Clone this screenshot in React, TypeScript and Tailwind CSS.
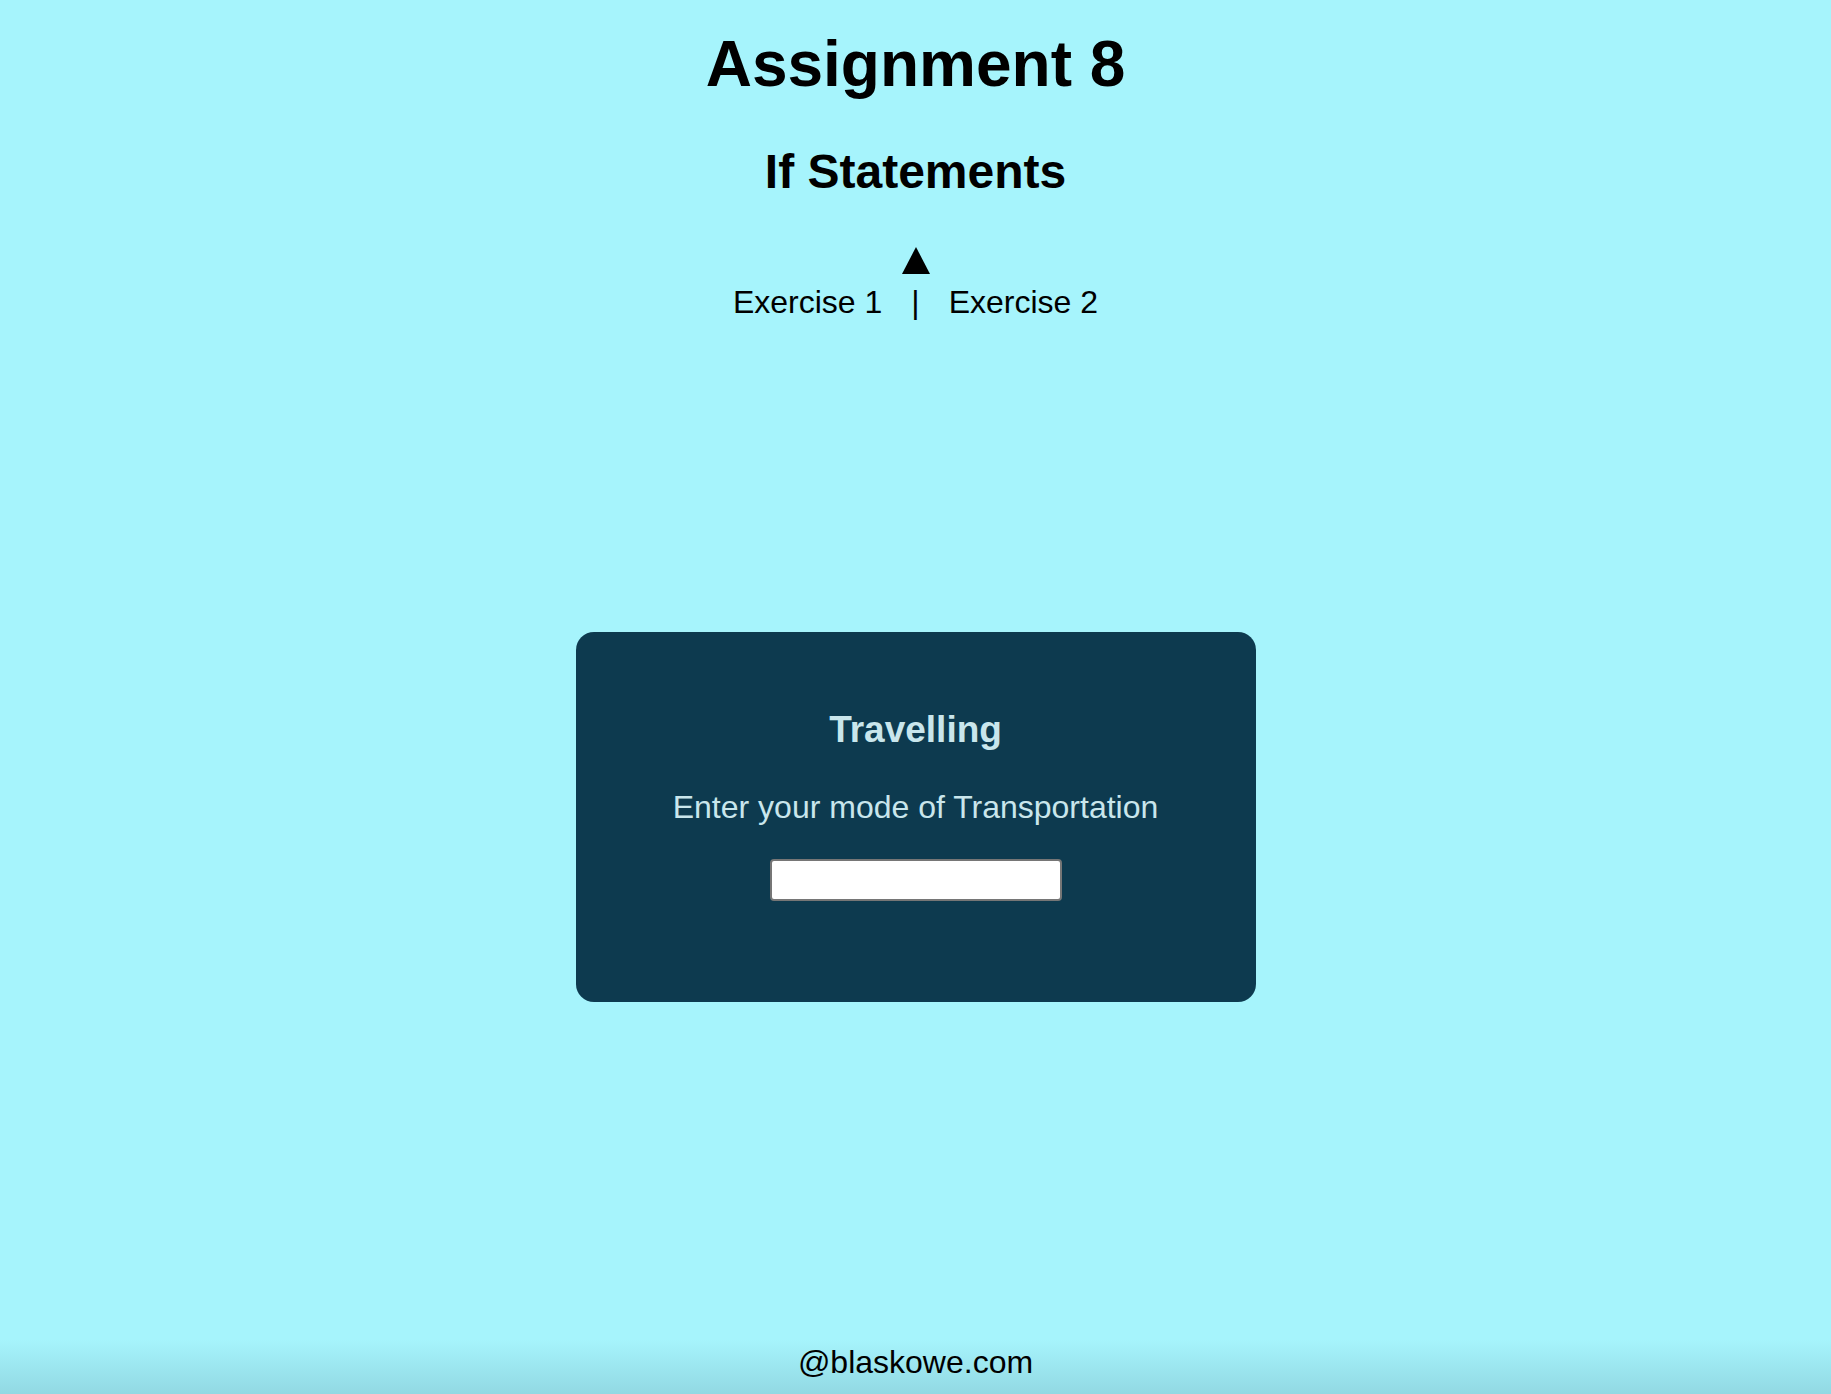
import React from "react"

const Triangle = () => (
    <svg width="28" height="27" viewBox="0 0 28 27" className="block">
        <polygon points="14,0 28,27 0,27" fill="#000" />
    </svg>
)

export default function App() {
    return (
        <div
            className="min-h-[1394px] flex flex-col bg-[#a6f4fc] text-black"
            style={{ fontFamily: '"Liberation Sans", Arial, Helvetica, sans-serif' }}
        >
            <main className="flex-1 flex flex-col items-center">
                <h1 className="pt-[27px] text-[64px] leading-[74px] font-bold">Assignment 8</h1>
                <h2 className="mt-[43px] text-[48px] leading-[55px] font-bold">If Statements</h2>

                <nav className="mt-[48px] flex flex-col items-center">
                    <Triangle />
                    <div className="mt-[10px] flex items-center gap-[29px] text-[32px] leading-[37px]">
                        <a className="cursor-pointer">Exercise 1</a>
                        <span>|</span>
                        <a className="cursor-pointer">Exercise 2</a>
                    </div>
                </nav>

                <section className="mt-[311px] w-[680px] h-[370px] rounded-[18px] bg-[#0d3a4f] flex flex-col items-center pt-[76px] text-[#c9e6ec]">
                    <h3 className="text-[37px] leading-[43px] font-bold">Travelling</h3>
                    <p className="mt-[38px] text-[32px] leading-[37px]">Enter your mode of Transportation</p>
                    <input
                        type="text"
                        className="mt-[33px] w-[292px] h-[42px] bg-white border-2 border-[#767676] rounded-[4px] px-2 text-[24px] text-black outline-none"
                    />
                </section>
            </main>

            <footer className="h-[54px] flex justify-center pt-[4px] bg-gradient-to-b from-[#a6f4fc] to-[#92d9e3] text-[32px] leading-[37px]">
                @blaskowe.com
            </footer>
        </div>
    )
}
